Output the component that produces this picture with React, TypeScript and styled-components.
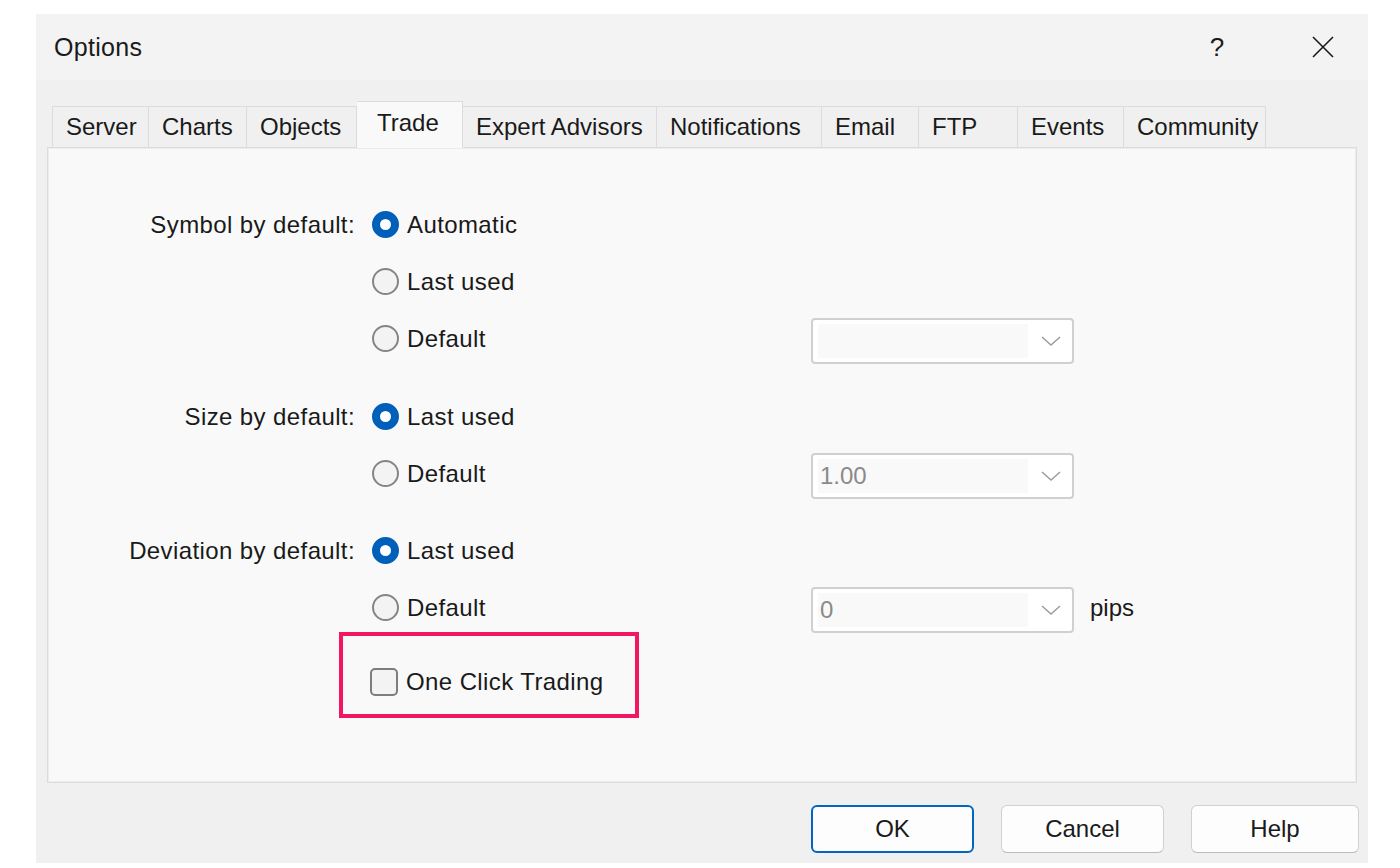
import React from 'react';
import styled, { createGlobalStyle } from 'styled-components';

const GlobalStyle = createGlobalStyle`
  html, body {
    margin: 0;
    padding: 0;
    background: #ffffff;
  }
  body {
    font-family: "Liberation Sans", Arial, sans-serif;
    color: #1a1a1a;
  }
`;

const tabs = [
  { name: 'Server', width: 97 },
  { name: 'Charts', width: 98 },
  { name: 'Objects', width: 110 },
  { name: 'Trade', width: 106 },
  { name: 'Expert Advisors', width: 194 },
  { name: 'Notifications', width: 165 },
  { name: 'Email', width: 97 },
  { name: 'FTP', width: 99 },
  { name: 'Events', width: 106 },
  { name: 'Community', width: 142 },
];

export default function App() {
  return (
    <Page>
      <GlobalStyle />
      <Dialog>
        <TitleBar>
          <Title>Options</Title>
          <TitleButtons>
            <TitleButton>?</TitleButton>
            <TitleButton>
              <svg width="24" height="24" viewBox="0 0 24 24">
                <path d="M2 2 L22 22 M22 2 L2 22" stroke="#1a1a1a" strokeWidth="1.6" fill="none" />
              </svg>
            </TitleButton>
          </TitleButtons>
        </TitleBar>

        <TabStrip>
          {tabs.map((t) => (
            <Tab key={t.name} $width={t.width} $active={t.name === 'Trade'}>
              {t.name}
            </Tab>
          ))}
        </TabStrip>

        <Panel>
          <Group>
            <Row>
              <Label>Symbol by default:</Label>
              <Radio checked>Automatic</Radio>
            </Row>
            <Row>
              <span />
              <Radio>Last used</Radio>
            </Row>
            <Row>
              <span />
              <Radio>Default</Radio>
              <Combo value="" />
            </Row>
          </Group>

          <Group $gap={21}>
            <Row>
              <Label>Size by default:</Label>
              <Radio checked>Last used</Radio>
            </Row>
            <Row>
              <span />
              <Radio>Default</Radio>
              <Combo value="1.00" />
            </Row>
          </Group>

          <Group $gap={20}>
            <Row>
              <Label>Deviation by default:</Label>
              <Radio checked>Last used</Radio>
            </Row>
            <Row>
              <span />
              <Radio>Default</Radio>
              <Combo value="0" />
              <Unit>pips</Unit>
            </Row>
          </Group>

          <Group $gap={17}>
            <Row>
              <span />
              <CheckCell>
                <CheckBox />
                <OptionText>One Click Trading</OptionText>
                <Highlight />
              </CheckCell>
            </Row>
          </Group>
        </Panel>

        <ButtonBar>
          <Button $primary $width={163}>OK</Button>
          <Button $width={163}>Cancel</Button>
          <Button $width={168}>Help</Button>
        </ButtonBar>
      </Dialog>
    </Page>
  );
}

function Radio({ checked, children }: { checked?: boolean; children: React.ReactNode }) {
  return (
    <RadioLabel>
      <RadioDot $checked={!!checked} />
      <OptionText>{children}</OptionText>
    </RadioLabel>
  );
}

function Combo({ value }: { value: string }) {
  return (
    <ComboBox>
      <ComboField>{value}</ComboField>
      <svg width="22" height="12" viewBox="0 0 22 12">
        <path d="M2 2 L11 10 L20 2" stroke="#9a9a9a" strokeWidth="1.4" fill="none" />
      </svg>
    </ComboBox>
  );
}

const Page = styled.div`
  width: 1400px;
  height: 868px;
  padding-top: 14px;
  padding-left: 36px;
  box-sizing: border-box;
  background: #ffffff;
`;

const Dialog = styled.div`
  width: 1332px;
  height: 849px;
  background: #f0f0f0;
  display: flex;
  flex-direction: column;
  padding: 0 11px;
  box-sizing: border-box;
`;

const TitleBar = styled.div`
  height: 66px;
  margin: 0 -11px;
  padding-left: 18px;
  background: #f3f3f3;
  display: flex;
  align-items: center;
  justify-content: space-between;
`;

const Title = styled.div`
  font-size: 25px;
  color: #1a1a1a;
  letter-spacing: 0.3px;
`;

const TitleButtons = styled.div`
  display: flex;
  align-items: center;
  gap: 16px;
`;

const TitleButton = styled.div`
  width: 90px;
  height: 66px;
  display: flex;
  align-items: center;
  justify-content: center;
  font-size: 26px;
  color: #1a1a1a;
`;

const TabStrip = styled.div`
  display: flex;
  align-items: flex-end;
  height: 47px;
  margin-top: 20px;
  padding-left: 5px;
  position: relative;
  z-index: 1;
`;

const Tab = styled.div<{ $width: number; $active?: boolean }>`
  width: ${(p) => p.$width}px;
  height: ${(p) => (p.$active ? 47 : 42)}px;
  box-sizing: border-box;
  padding-left: ${(p) => (p.$active ? 20 : 13)}px;
  padding-bottom: ${(p) => (p.$active ? 4 : 0)}px;
  display: flex;
  align-items: center;
  font-size: 24px;
  color: #1a1a1a;
  white-space: nowrap;
  background: ${(p) => (p.$active ? '#f9f9f9' : '#f0f0f0')};
  border: 1px solid #dcdcdc;
  border-bottom: 1px solid ${(p) => (p.$active ? '#f9f9f9' : '#dcdcdc')};
  margin-bottom: -1px;
  & + & {
    border-left: none;
  }
`;

const Panel = styled.div`
  height: 636px;
  box-sizing: border-box;
  background: #f9f9f9;
  border: 1px solid #dcdcdc;
  box-shadow: inset 0 0 0 1px #ececec;
  padding-top: 48px;
`;

const Group = styled.div<{ $gap?: number }>`
  margin-top: ${(p) => p.$gap ?? 0}px;
`;

const Row = styled.div`
  display: grid;
  grid-template-columns: 324px 439px 263px auto;
  align-items: center;
  height: 57px;
`;

const Label = styled.div`
  text-align: right;
  padding-right: 17px;
  font-size: 24px;
  letter-spacing: 0.4px;
  color: #1a1a1a;
`;

const RadioLabel = styled.div`
  display: flex;
  align-items: center;
  gap: 8px;
`;

const RadioDot = styled.div<{ $checked: boolean }>`
  width: 27px;
  height: 27px;
  border-radius: 50%;
  box-sizing: border-box;
  background: ${(p) => (p.$checked ? '#ffffff' : '#f3f3f3')};
  border: ${(p) => (p.$checked ? '8px solid #005fb8' : '2px solid #858585')};
`;

const OptionText = styled.span`
  font-size: 24px;
  letter-spacing: 0.4px;
  color: #1a1a1a;
  white-space: nowrap;
`;

const CheckCell = styled.div`
  position: relative;
  display: flex;
  align-items: center;
  gap: 8px;
  margin-left: -2px;
`;

const CheckBox = styled.div`
  width: 28px;
  height: 28px;
  box-sizing: border-box;
  border: 2px solid #7d7d7d;
  border-radius: 5px;
  background: #f3f3f3;
`;

const Highlight = styled.div`
  position: absolute;
  left: -31px;
  top: -36px;
  width: 300px;
  height: 86px;
  box-sizing: border-box;
  border: 4px solid #f21762;
  pointer-events: none;
`;

const ComboBox = styled.div`
  height: 46px;
  box-sizing: border-box;
  border: 2px solid #d0d0d0;
  border-radius: 4px;
  background: #ffffff;
  display: flex;
  align-items: center;
  padding: 4px 10px 4px 5px;
  gap: 12px;
  margin-top: 5px;
`;

const ComboField = styled.div`
  flex: 1;
  height: 34px;
  background: #f9f9f9;
  display: flex;
  align-items: center;
  font-size: 24px;
  color: #8a8a8a;
  padding-left: 2px;
`;

const Unit = styled.div`
  font-size: 24px;
  color: #1a1a1a;
  margin-left: 16px;
`;

const ButtonBar = styled.div`
  display: flex;
  justify-content: flex-end;
  gap: 27px;
  margin-top: 22px;
  margin-right: -2px;
`;

const Button = styled.div<{ $primary?: boolean; $width: number }>`
  width: ${(p) => p.$width}px;
  height: 48px;
  box-sizing: border-box;
  border-radius: 6px;
  background: #fdfdfd;
  border: ${(p) => (p.$primary ? '2px solid #0067c0' : '1.5px solid #d0d0d0')};
  border-bottom-color: ${(p) => (p.$primary ? '#0067c0' : '#bcbcbc')};
  display: flex;
  align-items: center;
  justify-content: center;
  font-size: 24px;
  color: #1a1a1a;
`;
